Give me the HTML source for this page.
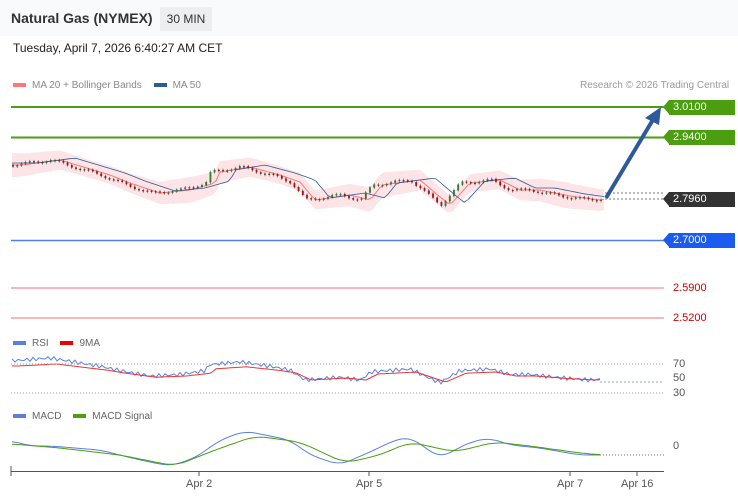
<!DOCTYPE html>
<html><head><meta charset="utf-8"><style>
body{margin:0;width:738px;height:500px;background:#fff;font-family:"Liberation Sans",sans-serif;overflow:hidden;position:relative}
.hdr{position:absolute;left:0;top:0;width:738px;height:36px;background:#f9fafb}
.t{position:absolute;white-space:nowrap}
.tag{position:absolute;left:669px;width:66px;height:15px;color:#fff;font-size:11px;line-height:15px;padding-left:4px;box-sizing:border-box}
.tag:before{content:"";position:absolute;left:-6px;top:0;border-top:7.5px solid transparent;border-bottom:7.5px solid transparent;border-right:6px solid var(--c)}
</style></head><body>
<div class="hdr"></div>
<div class="t" style="left:11px;top:10px;font-size:14px;font-weight:bold;color:#333">Natural Gas (NYMEX)</div>
<div class="t" style="left:160px;top:7px;width:52px;height:24px;background:#eceef0;font-size:12px;line-height:24px;text-align:center;color:#333">30 MIN</div>
<div class="t" style="left:13px;top:41px;font-size:12px;color:#222">Tuesday, April 7, 2026 6:40:27 AM CET</div>
<div class="t" style="left:13px;top:80px;font-size:10px;color:#888"><span style="display:inline-block;width:13px;height:4px;background:#f77;vertical-align:middle;margin-right:6px"></span>MA 20 + Bollinger Bands <span style="display:inline-block;width:13px;height:4px;background:#2d5b9a;vertical-align:middle;margin:0 6px 0 9px"></span>MA 50</div>
<div class="t" style="left:580px;top:80px;font-size:10px;color:#999">Research © 2026 Trading Central</div>
<div class="t" style="left:13px;top:338px;font-size:10px;color:#666"><span style="display:inline-block;width:13px;height:4px;background:#5b7fe0;vertical-align:middle;margin-right:6px"></span>RSI <span style="display:inline-block;width:13px;height:4px;background:#e00;vertical-align:middle;margin:0 6px 0 9px"></span>9MA</div>
<div class="t" style="left:13px;top:411px;font-size:10px;color:#666"><span style="display:inline-block;width:13px;height:4px;background:#5b7fe0;vertical-align:middle;margin-right:6px"></span>MACD <span style="display:inline-block;width:13px;height:4px;background:#4a9e10;vertical-align:middle;margin:0 6px 0 9px"></span>MACD Signal</div>
<svg id="s" width="738" height="500" style="position:absolute;left:0;top:0">
<line x1="11" y1="107" x2="664" y2="107" stroke="#4a9e10" stroke-width="2"/>
<line x1="11" y1="137.5" x2="664" y2="137.5" stroke="#4a9e10" stroke-width="2"/>
<line x1="11" y1="240.5" x2="664" y2="240.5" stroke="#4d7ff0" stroke-width="1.5"/>
<line x1="11" y1="288" x2="664" y2="288" stroke="#f4a0a0" stroke-width="1.5"/>
<line x1="11" y1="318" x2="664" y2="318" stroke="#f4a0a0" stroke-width="1.5"/>
<line x1="605" y1="193" x2="664" y2="193" stroke="#777" stroke-dasharray="2,2"/>
<line x1="605" y1="199" x2="664" y2="199" stroke="#777" stroke-dasharray="2,2"/>
<g id="g"></g>
<line x1="606" y1="198" x2="654" y2="118" stroke="#2d5b9a" stroke-width="4"/>
<polygon points="661,107 645,118 659,125" fill="#2d5b9a"/>
<line x1="11" y1="364" x2="664" y2="364" stroke="#999" stroke-dasharray="1,2"/>
<line x1="11" y1="393" x2="664" y2="393" stroke="#999" stroke-dasharray="1,2"/>
<line x1="600" y1="382" x2="664" y2="382" stroke="#9ab" stroke-dasharray="2,2"/>
<line x1="600" y1="455" x2="664" y2="455" stroke="#777" stroke-dasharray="1,2"/>
<line x1="11" y1="471.5" x2="664" y2="471.5" stroke="#555"/>
<line x1="11" y1="466" x2="11" y2="476" stroke="#555"/>
<line x1="199" y1="471" x2="199" y2="476" stroke="#555"/>
<line x1="369" y1="471" x2="369" y2="476" stroke="#555"/>
<line x1="570" y1="471" x2="570" y2="476" stroke="#555"/>
<line x1="637" y1="471" x2="637" y2="476" stroke="#555"/>
</svg>
<div class="tag" style="top:100px;background:#4a9e10;--c:#4a9e10">3.0100</div>
<div class="tag" style="top:130px;background:#4a9e10;--c:#4a9e10">2.9400</div>
<div class="tag" style="top:192px;background:#333;--c:#333">2.7960</div>
<div class="tag" style="top:233px;background:#1a5cf0;--c:#1a5cf0">2.7000</div>
<div class="t" style="left:673px;top:282px;font-size:11px;color:#c00">2.5900</div>
<div class="t" style="left:673px;top:312px;font-size:11px;color:#c00">2.5200</div>
<div class="t" style="left:673px;top:358px;font-size:11px;color:#555">70</div>
<div class="t" style="left:673px;top:372px;font-size:11px;color:#555">50</div>
<div class="t" style="left:673px;top:387px;font-size:11px;color:#555">30</div>
<div class="t" style="left:673px;top:440px;font-size:11px;color:#555">0</div>
<div class="t" style="left:186px;top:478px;font-size:11px;color:#555">Apr 2</div>
<div class="t" style="left:356px;top:478px;font-size:11px;color:#555">Apr 5</div>
<div class="t" style="left:557px;top:478px;font-size:11px;color:#555">Apr 7</div>
<div class="t" style="left:621px;top:478px;font-size:11px;color:#555">Apr 16</div>
<script>
function mk(kp){return function(x){if(x<=kp[0][0])return kp[0][1];for(var i=1;i<kp.length;i++)if(x<=kp[i][0]){var a=kp[i-1],b=kp[i];return a[1]+(b[1]-a[1])*(x-a[0])/(b[0]-a[0]);}return kp[kp.length-1][1];}}
function sm(fn,r){return function(x){var s=0,n=0;for(var d=-r;d<=r;d+=2){s+=fn(x+d);n++;}return s/n;}}
var f=mk([[12,165],[50,160],[100,175],[120,183],[150,193],[180,190],[205,183],[210,172],[240,167],[270,175],[290,182],[305,200],[340,195],[360,200],[372,185],[410,180],[430,197],[440,205],[460,183],[490,180],[510,190],[530,190],[560,196],[590,200],[605,198]]);
var g=document.getElementById('g'),h='';
var up='',lo='',ma='',m5='';
for(var x=12;x<=605;x+=4){var c=f(x-10),w=13-Math.abs(Math.sin(x/60))*4;up+=(x==12?'M':'L')+x+','+(c-w);lo=' L'+x+','+(c+w)+lo;ma+=(x==12?'M':'L')+x+','+c;m5+=(x==12?'M':'L')+x+','+(f(x-25)-2);}
h+='<path d="'+up+lo+'Z" fill="#fde4e6"/>';
h+='<path d="'+ma+'" stroke="#f77" fill="none"/><path d="'+m5+'" stroke="#2d5b9a" fill="none" stroke-width="0.8"/>';
var p=f(12);
for(var x=12;x<=603;x+=4.2){var n=f(x)+Math.sin(x*1.7)*1.5,o=p,cl=n;var t=Math.min(o,cl),b=Math.max(o,cl);if(b-t<1)b=t+1;var col=cl<o?'#2a8a2a':'#c00';
h+='<line x1="'+(x+1)+'" x2="'+(x+1)+'" y1="'+(t-1.5)+'" y2="'+(b+1.5)+'" stroke="#333" stroke-width="0.5"/><rect x="'+(x+0.2)+'" y="'+t+'" width="1.6" height="'+(b-t)+'" fill="'+col+'" stroke="#333" stroke-width="0.2"/>';p=n;}
function line(fn,col){var d='';for(var x=12;x<=602;x+=3)d+=(x==12?'M':'L')+x+','+fn(x).toFixed(1);h+='<path d="'+d+'" stroke="'+col+'" fill="none" stroke-width="1"/>';}
line(function(x){return 380-(200-f(x))*0.55+Math.sin(x*0.9)*2},'#5b7fe0');
line(function(x){return 380-(200-f(x-6))*0.4},'#e33');
var m=sm(mk([[12,441],[30,446],[50,446],[100,450],[140,460],[170,466],[195,458],[220,440],[245,431],[270,436],[290,440],[310,455],[340,465],[370,452],[395,440],[410,437],[440,458],[470,442],[490,438],[510,445],[540,448],[580,455],[602,455]]),10);
var ms=sm(mk([[12,444],[60,448],[120,455],[175,466],[215,450],[255,436],[300,442],[345,463],[380,455],[410,442],[455,452],[495,442],[530,446],[580,453],[602,455]]),12);
line(m,'#5b7fe0');line(ms,'#4a9e10');
g.innerHTML=h;
</script>
</body></html>
